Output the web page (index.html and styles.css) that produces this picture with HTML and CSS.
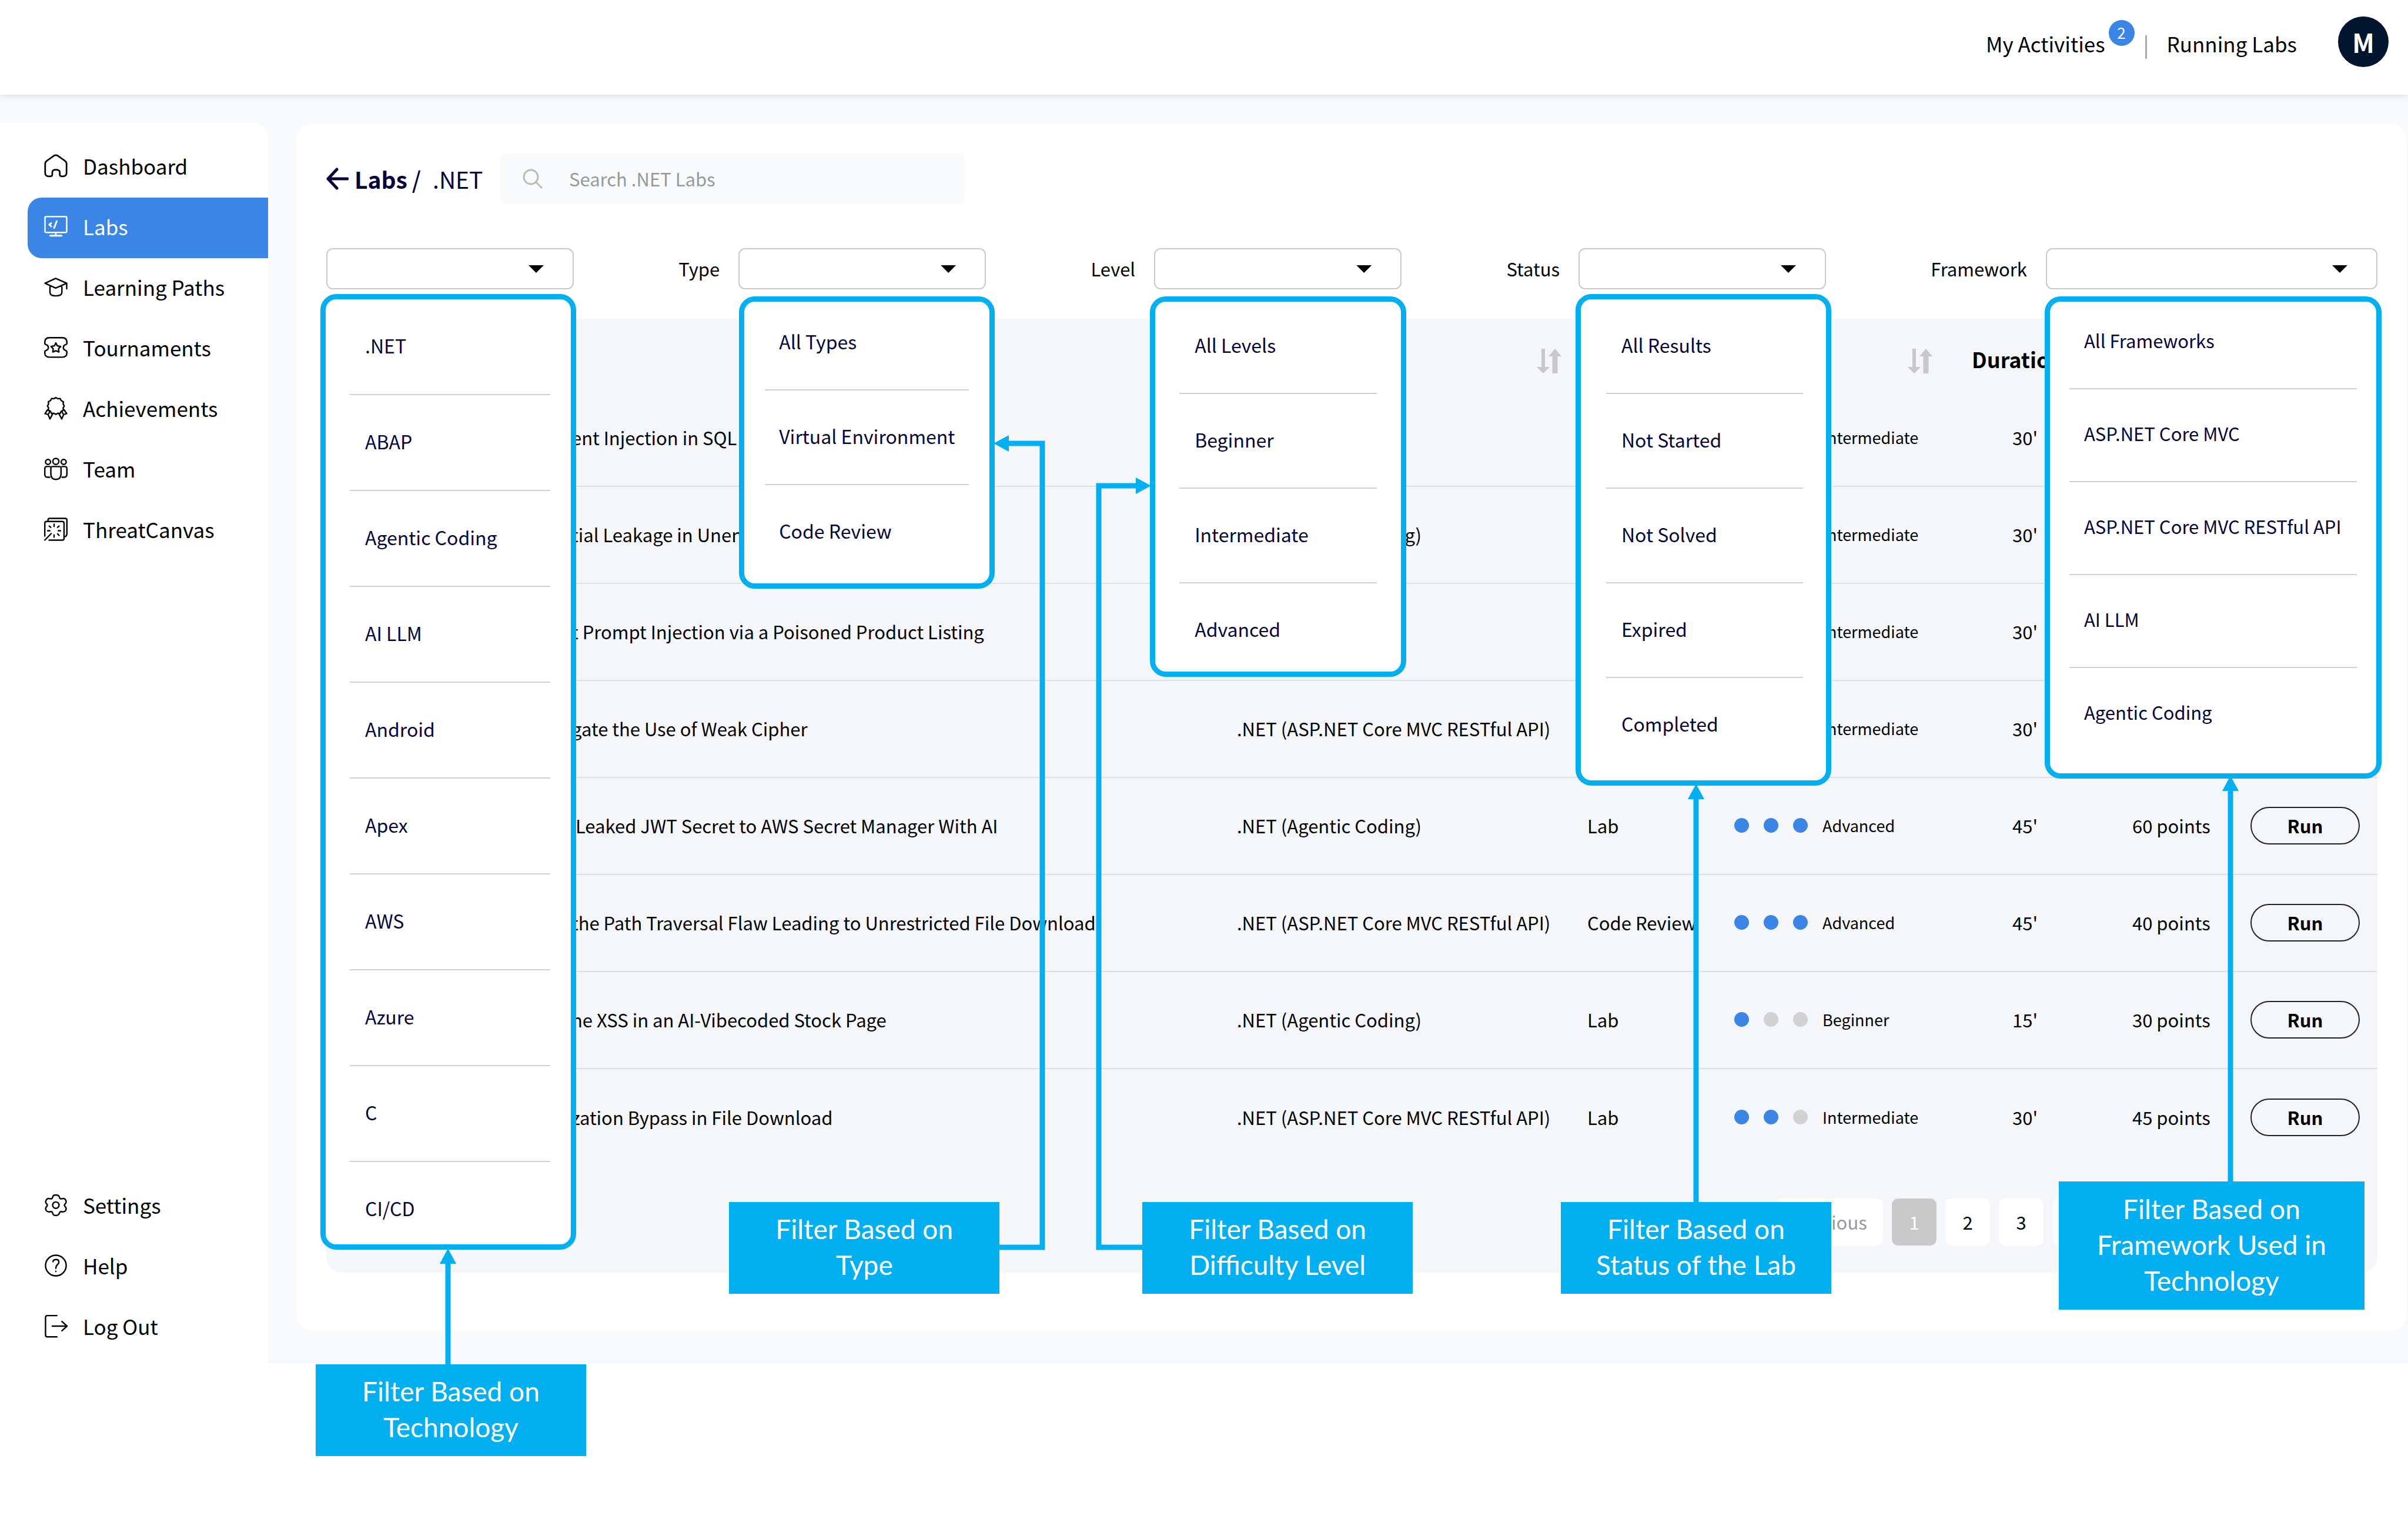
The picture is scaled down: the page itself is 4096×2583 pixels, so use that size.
FILE: index.html
```html
<!DOCTYPE html>
<html lang="en">

<head>
    <meta charset="UTF-8">
    <meta name="viewport" content="width=device-width, initial-scale=1.0">
    <title>.NET Labs</title>
    <link rel="stylesheet" href="styles.css">
</head>

<body>

    <header class="topbar">
        <a href="#" class="top-link">My Activities<span class="badge">2</span></a>
        <span class="divider"></span>
        <a href="#" class="top-link">Running Labs</a>
        <button class="avatar">M</button>
    </header>

    <div class="layout">

        <!-- Sidebar -->
        <aside class="sidebar">
            <nav class="nav">
                <a href="#" class="nav-item">
                    <svg class="icon" viewBox="0 0 132 132"><path stroke-width="9" d="M6 54Q6 44 15 38L54 10Q66 3 78 10L117 38Q126 44 126 54V105Q126 125 105 125H98Q88 125 88 115V102Q88 88 66 88Q46 88 46 102V115Q46 125 36 125H26Q6 125 6 105Z"/></svg>
                    Dashboard
                </a>
                <a href="#" class="nav-item active">
                    <svg class="icon" viewBox="0 0 132 132"><rect x="5" y="11" width="122" height="89" rx="7"/><path d="M66 100V116"/><path stroke-width="10" d="M34 118H98M40 48L29 56L40 66M71 37L56 75"/></svg>
                    Labs
                </a>
                <a href="#" class="nav-item">
                    <svg class="icon" viewBox="0 0 132 132"><path d="M5 45L65 18L127 45L65 72ZM33 58V98Q35 116 65 116Q98 116 100 98V58M127 45V76"/></svg>
                    Learning Paths
                </a>
                <a href="#" class="nav-item">
                    <svg class="icon" viewBox="0 0 132 132"><path d="M30 11H102Q128 11 128 37V42Q128 48 120 50Q108 54 108 66Q108 78 120 82Q128 84 128 92V95Q128 120 102 120H30Q4 120 4 95V90Q4 84 12 82Q24 78 24 66Q24 54 12 50Q4 48 4 42V37Q4 11 30 11ZM66 40L74 56L93 60L81 73L83 91L66 84L49 91L51 73L39 60L58 56Z"/></svg>
                    Tournaments
                </a>
                <a href="#" class="nav-item">
                    <svg class="icon" viewBox="0 0 132 132"><path d="M66 7L77 13L90 12L96 24L108 30L107 43L113 54L107 65L108 78L96 84L90 96L77 95L66 101L55 95L42 96L36 84L24 78L25 65L19 54L25 43L24 30L36 24L42 12L55 13ZM19 76L5 97L22 101L33 127L49 97M32 82L27 96M113 76L127 97L110 101L99 127L83 97M100 82L105 96"/></svg>
                    Achievements
                </a>
                <a href="#" class="nav-item">
                    <svg class="icon" viewBox="0 0 132 132"><circle cx="22" cy="28" r="14"/><circle cx="66" cy="25" r="17"/><circle cx="110" cy="28" r="14"/><path d="M38 62Q38 54 46 54H86Q95 54 95 62V95Q95 126 66 126Q38 126 38 95ZM32 54H14Q4 54 4 66V98Q4 114 22 114H32M101 54H118Q128 54 128 66V98Q128 114 110 114H101"/></svg>
                    Team
                </a>
                <a href="#" class="nav-item">
                    <svg class="icon" viewBox="0 0 132 132"><path d="M22 20V14Q22 5 31 5H118Q128 5 128 14V88Q128 106 114 108M4 104V32Q4 22 14 22H102Q112 22 112 32V117Q112 127 102 127H28M4 127L40 90M56 38V50M56 98V110M20 74H32M80 74H92M29 48L37 55M84 48L76 55M84 100L76 92"/></svg>
                    ThreatCanvas
                </a>
            </nav>

            <nav class="nav">
                <a href="#" class="nav-item">
                    <svg class="icon" viewBox="0 0 132 132"><path d="M48 22Q50 10 66 10Q82 10 86 22Q88 34 100 31Q114 26 121 38Q128 52 118 60Q110 67 118 75Q128 84 121 97Q112 108 100 104Q88 101 86 112Q82 125 66 125Q50 125 48 112Q46 101 34 104Q20 108 12 97Q5 84 14 75Q23 67 14 60Q5 52 12 38Q19 26 34 31Q46 34 48 22Z"/><circle cx="66" cy="67" r="18"/></svg>
                    Settings
                </a>
                <a href="#" class="nav-item">
                    <svg class="icon" viewBox="0 0 132 132"><circle cx="66" cy="66" r="58"/><path d="M50 44Q52 32 66 32Q83 32 83 46Q83 55 74 62Q66 69 66 82M66 98V99"/></svg>
                    Help
                </a>
                <a href="#" class="nav-item">
                    <svg class="icon" viewBox="0 0 132 132"><path d="M72 7H18Q8 7 8 17V116Q8 126 18 126H72M46 66H128M100 40L129 66L100 92"/></svg>
                    Log Out
                </a>
            </nav>
        </aside>

        <main class="main">
            <section class="panel">

                <div class="heading">
                    <h1 class="breadcrumb">
                        <a href="#" class="back">
                            <svg class="back-icon" viewBox="0 0 38 38"><path d="M36 19H3M18 3L3 19L18 35"/></svg>
                            Labs
                        </a>
                        <span class="slash">/</span>
                        <span class="current">.NET</span>
                    </h1>
                    <label class="search">
                        <svg class="search-icon" viewBox="0 0 34 34"><circle cx="14" cy="14" r="12"/><path d="M23 23L32 32"/></svg>
                        <input type="text" placeholder="Search .NET Labs">
                    </label>
                </div>

                <!-- Filters with their open menus and notes -->
                <div class="filters">
                    <div class="filter">
                        <div class="select-box">
                            <select aria-label="Technology"><option></option></select>
                            <ul class="menu menu-technology">
                                <li>.NET</li>
                                <li>ABAP</li>
                                <li>Agentic Coding</li>
                                <li>AI LLM</li>
                                <li>Android</li>
                                <li>Apex</li>
                                <li>AWS</li>
                                <li>Azure</li>
                                <li>C</li>
                                <li>CI/CD</li>
                            </ul>
                            <svg class="connector connector-technology" viewBox="0 0 28 198"><path d="M14 198V20"/><polygon points="14,0 28,26 0,26"/></svg>
                            <div class="note note-technology">Filter Based on Technology</div>
                        </div>
                    </div>

                    <div class="filter">
                        <label for="type">Type</label>
                        <div class="select-box">
                            <select id="type"><option></option></select>
                            <ul class="menu menu-type">
                                <li>All Types</li>
                                <li>Virtual Environment</li>
                                <li>Code Review</li>
                            </ul>
                            <svg class="connector connector-type" viewBox="0 0 88 1386"><path d="M8 1381H83V14H20"/><polygon points="0,14 26,0 26,28"/></svg>
                            <div class="note note-type">Filter Based on Type</div>
                        </div>
                    </div>

                    <div class="filter">
                        <label for="level">Level</label>
                        <div class="select-box">
                            <select id="level"><option></option></select>
                            <ul class="menu menu-level">
                                <li>All Levels</li>
                                <li>Beginner</li>
                                <li>Intermediate</li>
                                <li>Advanced</li>
                            </ul>
                            <svg class="connector connector-level" viewBox="0 0 94 1314"><path d="M80 1309H5V14H74"/><polygon points="94,14 68,0 68,28"/></svg>
                            <div class="note note-level">Filter Based on Difficulty Level</div>
                        </div>
                    </div>

                    <div class="filter">
                        <label for="status">Status</label>
                        <div class="select-box">
                            <select id="status"><option></option></select>
                            <ul class="menu menu-status">
                                <li>All Results</li>
                                <li>Not Started</li>
                                <li>Not Solved</li>
                                <li>Expired</li>
                                <li>Completed</li>
                            </ul>
                            <svg class="connector connector-status" viewBox="0 0 28 712"><path d="M14 712V20"/><polygon points="14,0 28,26 0,26"/></svg>
                            <div class="note note-status">Filter Based on Status of the Lab</div>
                        </div>
                    </div>

                    <div class="filter filter-wide">
                        <label for="framework">Framework</label>
                        <div class="select-box">
                            <select id="framework"><option></option></select>
                            <ul class="menu menu-framework">
                                <li>All Frameworks</li>
                                <li>ASP.NET Core MVC</li>
                                <li>ASP.NET Core MVC RESTful API</li>
                                <li>AI LLM</li>
                                <li>Agentic Coding</li>
                            </ul>
                            <svg class="connector connector-framework" viewBox="0 0 28 692"><path d="M14 692V20"/><polygon points="14,0 28,26 0,26"/></svg>
                            <div class="note note-framework">Filter Based on Framework Used in Technology</div>
                        </div>
                    </div>
                </div>

                <!-- Labs list -->
                <div class="labs">
                    <table class="labs-table">
                        <colgroup>
                            <col class="col-title">
                            <col class="col-framework">
                            <col class="col-type">
                            <col class="col-level">
                            <col class="col-duration">
                            <col class="col-points">
                            <col class="col-run">
                        </colgroup>
                        <thead>
                            <tr>
                                <th></th>
                                <th class="sort"><svg class="sort-icon" viewBox="0 0 42 42"><path class="thin" d="M11 0V34"/><path class="thick" d="M31 42V10"/><polygon points="0,31 22,31 11,42"/><polygon points="20,13 42,13 31,0"/></svg></th>
                                <th></th>
                                <th class="sort sort-level"><svg class="sort-icon" viewBox="0 0 42 42"><path class="thin" d="M11 0V34"/><path class="thick" d="M31 42V10"/><polygon points="0,31 22,31 11,42"/><polygon points="20,13 42,13 31,0"/></svg></th>
                                <th>Duration</th>
                                <th></th>
                                <th></th>
                            </tr>
                        </thead>
                        <tbody>
                            <tr>
                                <td class="title">ent Injection in SQL A</td>
                                <td></td>
                                <td></td>
                                <td><div class="level"><i class="dot on"></i><i class="dot on"></i><i class="dot"></i>Intermediate</div></td>
                                <td class="duration">30'</td>
                                <td></td>
                                <td></td>
                            </tr>
                            <tr>
                                <td class="title">tial Leakage in Unen</td>
                                <td>.NET (Agentic Coding)</td>
                                <td></td>
                                <td><div class="level"><i class="dot on"></i><i class="dot on"></i><i class="dot"></i>Intermediate</div></td>
                                <td class="duration">30'</td>
                                <td></td>
                                <td></td>
                            </tr>
                            <tr>
                                <td class="title">t Prompt Injection via a Poisoned Product Listing</td>
                                <td></td>
                                <td></td>
                                <td><div class="level"><i class="dot on"></i><i class="dot on"></i><i class="dot"></i>Intermediate</div></td>
                                <td class="duration">30'</td>
                                <td></td>
                                <td></td>
                            </tr>
                            <tr>
                                <td class="title">gate the Use of Weak Cipher</td>
                                <td>.NET (ASP.NET Core MVC RESTful API)</td>
                                <td></td>
                                <td><div class="level"><i class="dot on"></i><i class="dot on"></i><i class="dot"></i>Intermediate</div></td>
                                <td class="duration">30'</td>
                                <td></td>
                                <td></td>
                            </tr>
                            <tr>
                                <td class="title">&nbsp;Leaked JWT Secret to AWS Secret Manager With AI</td>
                                <td>.NET (Agentic Coding)</td>
                                <td>Lab</td>
                                <td><div class="level"><i class="dot on"></i><i class="dot on"></i><i class="dot on"></i>Advanced</div></td>
                                <td class="duration">45'</td>
                                <td>60 points</td>
                                <td><button class="run">Run</button></td>
                            </tr>
                            <tr>
                                <td class="title">the Path Traversal Flaw Leading to Unrestricted File Download</td>
                                <td>.NET (ASP.NET Core MVC RESTful API)</td>
                                <td>Code Review</td>
                                <td><div class="level"><i class="dot on"></i><i class="dot on"></i><i class="dot on"></i>Advanced</div></td>
                                <td class="duration">45'</td>
                                <td>40 points</td>
                                <td><button class="run">Run</button></td>
                            </tr>
                            <tr>
                                <td class="title">he XSS in an AI-Vibecoded Stock Page</td>
                                <td>.NET (Agentic Coding)</td>
                                <td>Lab</td>
                                <td><div class="level"><i class="dot on"></i><i class="dot"></i><i class="dot"></i>Beginner</div></td>
                                <td class="duration">15'</td>
                                <td>30 points</td>
                                <td><button class="run">Run</button></td>
                            </tr>
                            <tr>
                                <td class="title">zation Bypass in File Download</td>
                                <td>.NET (ASP.NET Core MVC RESTful API)</td>
                                <td>Lab</td>
                                <td><div class="level"><i class="dot on"></i><i class="dot on"></i><i class="dot"></i>Intermediate</div></td>
                                <td class="duration">30'</td>
                                <td>45 points</td>
                                <td><button class="run">Run</button></td>
                            </tr>
                        </tbody>
                    </table>

                    <div class="pagination">
                        <button class="page prev" disabled>Previous</button>
                        <button class="page current-page">1</button>
                        <button class="page">2</button>
                        <button class="page">3</button>
                        <button class="page">4</button>
                    </div>
                </div>

            </section>
        </main>
    </div>

</body>

</html>
```

FILE: styles.css
```css
* {
    box-sizing: border-box;
}

body {
    margin: 0;
    min-height: 100vh;
    background-color: #fff;
    color: #000;
    font-family: "Noto Sans CJK SC", "Noto Sans", sans-serif;
    font-size: 31px;
    line-height: 48px;
}

a {
    color: inherit;
    text-decoration: none;
}

button,
input,
select {
    font: inherit;
    color: inherit;
}

button {
    cursor: pointer;
    padding: 0;
}

/* Top bar */
.topbar {
    position: relative;
    display: flex;
    align-items: center;
    justify-content: flex-end;
    height: 161px;
    padding: 0 33px 14px 0;
    background-color: #fff;
    box-shadow: 0 2px 12px rgba(0, 0, 0, 0.12);
    font-size: 35px;
}

.top-link {
    position: relative;
}

.badge {
    position: absolute;
    top: -16px;
    right: -50px;
    width: 44px;
    height: 44px;
    border-radius: 50%;
    background-color: #3a85e6;
    color: #fff;
    font-size: 26px;
    line-height: 42px;
    text-align: center;
}

.divider {
    width: 3px;
    height: 40px;
    margin: 12px 34px 0 68px;
    background-color: #a9a9c6;
}

.avatar {
    width: 86px;
    height: 86px;
    margin: 0 0 5px 70px;
    border: none;
    border-radius: 50%;
    background-color: #02152e;
    color: #fff;
    font-size: 44px;
    font-weight: bold;
}

/* Layout */
.layout {
    display: grid;
    grid-template-columns: 456px 1fr;
    background-color: #f8fafc;
}

.sidebar {
    display: flex;
    flex-direction: column;
    justify-content: space-between;
    margin-top: 48px;
    padding: 24px 0 10px 47px;
    border-radius: 0 24px 0 0;
    background-color: #fff;
}

.nav-item {
    display: flex;
    align-items: center;
    gap: 26px;
    height: 103px;
    padding: 0 0 6px 28px;
    border-radius: 24px 0 0 24px;
    font-size: 35px;
}

.nav-item.active {
    background-color: #3a85e6;
    color: #fff;
}

.icon {
    width: 40px;
    height: 40px;
    fill: none;
    stroke: currentColor;
    stroke-width: 8;
    stroke-linecap: round;
    stroke-linejoin: round;
}

.main {
    padding: 49px 3px 56px 49px;
}

.panel {
    padding: 50px 49px 99px 50px;
    border-radius: 25px;
    background-color: #fff;
}

/* Breadcrumb and search */
.heading {
    display: flex;
    align-items: center;
    gap: 26px;
    color: #04043b;
}

.breadcrumb {
    display: flex;
    align-items: center;
    width: 270px;
    margin: 0;
    font-size: 39px;
    font-weight: normal;
}

.back {
    display: flex;
    align-items: center;
    gap: 10px;
    font-weight: bold;
}

.back-icon {
    width: 38px;
    height: 38px;
    fill: none;
    stroke: currentColor;
    stroke-width: 5;
    stroke-linecap: round;
    stroke-linejoin: round;
}

.slash {
    margin: 0 20px 0 8px;
    font-weight: 500;
}

.search {
    display: flex;
    align-items: center;
    gap: 45px;
    width: 790px;
    height: 87px;
    padding: 0 38px;
    border-radius: 11px;
    background-color: #f8fafc;
}

.search-icon {
    flex: none;
    width: 34px;
    height: 34px;
    fill: none;
    stroke: #bbb;
    stroke-width: 3;
    stroke-linecap: round;
}

.search input {
    flex: 1;
    padding: 0;
    border: none;
    outline: none;
    background: none;
}

.search input::placeholder {
    color: #999;
    opacity: 1;
}

/* Filters */
.filters {
    display: flex;
    justify-content: space-between;
    margin-top: 75px;
}

.filter {
    display: flex;
    align-items: center;
    gap: 32px;
}

.select-box {
    position: relative;
    width: 421px;
}

.filter-wide .select-box {
    width: 564px;
}

.select-box::after {
    content: "";
    position: absolute;
    top: 29px;
    right: 51px;
    width: 26px;
    height: 13px;
    background-color: #000;
    clip-path: polygon(0 0, 100% 0, 50% 100%);
    pointer-events: none;
}

.select-box select {
    display: block;
    width: 100%;
    height: 70px;
    border: 2px solid #c9c9c9;
    border-radius: 11px;
    background-color: #fff;
    appearance: none;
}

.menu {
    position: absolute;
    z-index: 2;
    margin: 0;
    padding: 0 41px;
    border: 9px solid #02b0f2;
    border-radius: 27px;
    background-color: #fff;
    color: #04043b;
    font-size: 32px;
    list-style: none;
}

.menu li {
    padding: 53px 26px 58px;
    border-bottom: 2px solid #cfcfd8;
    white-space: nowrap;
}

.menu li:last-child {
    border-bottom: none;
}

.menu-technology {
    top: 78px;
    left: -10px;
    width: 435px;
    padding-right: 35px;
}

.menu-technology li {
    padding-top: 54px;
    padding-bottom: 59px;
}

.menu-technology li:last-child {
    padding-bottom: 38px;
}

.menu-type {
    top: 82px;
    left: 1px;
    width: 435px;
    padding: 0 35px;
}

.menu-type li {
    padding-left: 24px;
}

.menu-type li:first-child {
    padding-top: 43px;
}

.menu-type li:last-child {
    padding-bottom: 66px;
}

.menu-level {
    top: 82px;
    left: -7px;
    width: 436px;
}

.menu-level li:first-child {
    padding-top: 49px;
}

.menu-level li:last-child {
    padding-bottom: 49px;
}

.menu-status {
    top: 78px;
    left: -5px;
    width: 435px;
    padding: 0 39px 0 43px;
}

.menu-status li:last-child {
    padding-bottom: 73px;
}

.menu-framework {
    top: 82px;
    left: -2px;
    width: 573px;
    padding: 0 33px;
    font-size: 31px;
}

.menu-framework li {
    padding: 51px 25px 57px;
}

.menu-framework li:first-child {
    padding-top: 42px;
}

.menu-framework li:last-child {
    padding-bottom: 80px;
}

/* Notes that explain each filter */
.note {
    position: absolute;
    z-index: 4;
    display: flex;
    align-items: center;
    justify-content: center;
    width: 460px;
    height: 156px;
    padding: 0 40px 4px;
    background-color: #02b0f2;
    color: #fff;
    font-family: Lato, sans-serif;
    font-size: 46px;
    line-height: 61px;
    text-align: center;
}

.note-technology {
    top: 1898px;
    left: -18px;
}

.note-type {
    top: 1622px;
    left: -16px;
}

.note-level {
    top: 1622px;
    left: -20px;
}

.note-status {
    top: 1622px;
    left: -30px;
}

.note-framework {
    top: 1587px;
    left: 22px;
    width: 520px;
    height: 218px;
}

.connector {
    position: absolute;
    z-index: 3;
    fill: #02b0f2;
}

.connector path {
    fill: none;
    stroke: #02b0f2;
    stroke-width: 9;
}

.connector-technology {
    top: 1701px;
    left: 193px;
    width: 28px;
    height: 198px;
}

.connector-type {
    top: 318px;
    left: 434px;
    width: 88px;
    height: 1386px;
}

.connector-level {
    top: 390px;
    left: -99px;
    width: 94px;
    height: 1314px;
}

.connector-status {
    top: 911px;
    left: 186px;
    width: 28px;
    height: 712px;
}

.connector-framework {
    top: 897px;
    left: 300px;
    width: 28px;
    height: 692px;
}

/* Labs table */
.labs {
    margin-top: 50px;
    padding-bottom: 46px;
    border-radius: 28px;
    background-color: #f5f6f9;
}

.labs-table {
    width: 100%;
    table-layout: fixed;
    border-collapse: separate;
    border-spacing: 0;
}

.labs-table th,
.labs-table td {
    padding: 0;
    text-align: left;
    white-space: nowrap;
}

.labs-table th {
    height: 121px;
    padding-top: 14px;
    font-size: 36px;
}

.labs-table td {
    height: 165px;
    padding-bottom: 2px;
    border-bottom: 2px solid #dfe0e4;
}

.labs-table tr:last-child td {
    border-bottom: none;
}

.labs-table .title {
    padding-left: 417px;
}

.labs-table .duration {
    padding-left: 69px;
}

.col-framework {
    width: 596px;
}

.col-type {
    width: 250px;
}

.col-level {
    width: 404px;
}

.col-duration {
    width: 273px;
}

.col-points {
    width: 201px;
}

.col-run {
    width: 216px;
}

.labs-table .sort {
    padding-right: 44px;
    text-align: right;
}

.labs-table .sort-level {
    padding-right: 67px;
}

.sort-icon {
    width: 42px;
    height: 42px;
    vertical-align: middle;
    fill: #c8c8c8;
    stroke: #c8c8c8;
    stroke-width: 0;
}

.sort-icon .thin {
    stroke-width: 6;
}

.sort-icon .thick {
    stroke-width: 9;
}

.level {
    display: flex;
    align-items: center;
    gap: 25px;
    font-size: 27px;
}

.dot {
    width: 25px;
    height: 25px;
    border-radius: 50%;
    background-color: #d2d2d2;
}

.dot.on {
    background-color: #3a85e6;
}

.run {
    display: block;
    width: 186px;
    height: 64px;
    border: 2px solid #222;
    border-radius: 32px;
    background: none;
    font-weight: bold;
}

.pagination {
    display: flex;
    justify-content: flex-end;
    gap: 15px;
    margin-top: 55px;
    padding-right: 477px;
}

.page {
    width: 76px;
    height: 80px;
    border: none;
    border-radius: 11px;
    background-color: #fff;
}

.prev {
    width: 180px;
    color: #999;
}

.current-page {
    background-color: #c9c9c9;
    color: #fff;
}
```
